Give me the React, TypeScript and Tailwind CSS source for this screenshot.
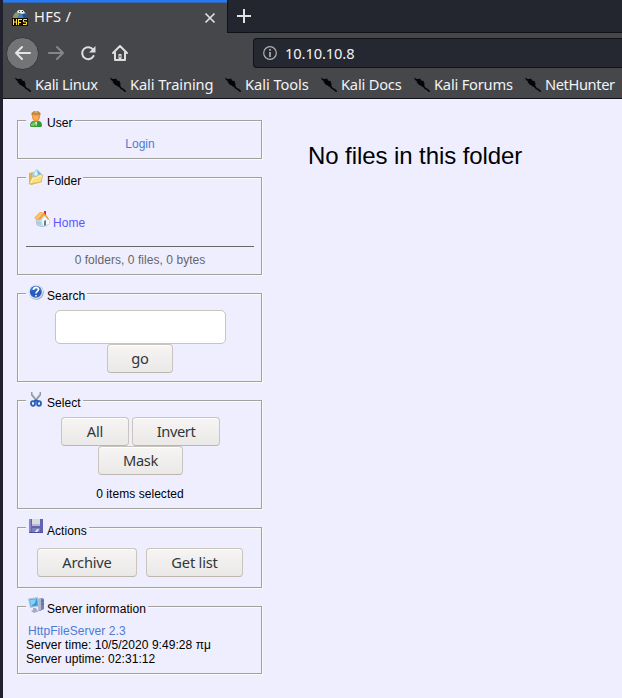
import type { ReactNode } from "react";

const BOOKMARKS = [
  { label: "Kali Linux", width: "w-[95px]", tracking: "tracking-[-0.33px]" },
  { label: "Kali Training", width: "w-[115px]", tracking: "tracking-[-0.1px]" },
  { label: "Kali Tools", width: "w-[96px]", tracking: "tracking-[-0.05px]" },
  { label: "Kali Docs", width: "w-[93px]", tracking: "tracking-[-0.2px]" },
  { label: "Kali Forums", width: "w-[111px]", tracking: "tracking-[-0.2px]" },
  { label: "NetHunter", width: "w-[98px]", tracking: "tracking-[-0.4px]" },
];

function KaliIcon() {
  return (
    <svg className="h-4 w-4 shrink-0" viewBox="0 0 16 16" fill="#050505">
      <path d="M0 .5l2.500 1.500L5 2l1-.7.800 1.700L8 4l1.500-.2.300 1.700.800 1L10.200 8.500l1.800 2.700 1.500.3L15 13l1 1v1l-2-.6-1.500-1.700-1.700-.4L9.500 10.500 7.500 9.300 6 8.300 4.500 7.500 3.500 6 2.500 5.300l.5-1L1 3z" />
    </svg>
  );
}

function Favicon() {
  return (
    <svg className="h-4 w-4" viewBox="0 0 16 16">
      <path d="M1 9V6l2-3 3-2 5-.5 3 3L15 9z" fill="#3f83bd" />
      <path d="M1 7l2-4 3-1 1 3-2 3-3 1z" fill="#8d9a65" />
      <path d="M5 1l2-1 4 0 2 3-3 1-2-1-2 0z" fill="#e9eeee" />
      <path d="M10 4l4 0 1 4-3 1z" fill="#205081" />
      <path d="M7 1h1v1H7zM10 1h1v1h-1z" fill="#222" />
      <rect y="8" width="16" height="8" fill="#160c05" />
      <path d="M1.500 9v6M4.500 9v6M1.500 12h3M6.500 15V9M6 9.500h4M6 12.500h3M15 9.500h-3.500v2.500h3v2.500H11" fill="none" stroke="#ffe832" />
    </svg>
  );
}

function UserIcon() {
  return (
    <svg className="h-4 w-4" viewBox="0 0 16 16">
      <path d="M2 15c0-4 2-5 4-5h4c3 0 4 2 4 5l-1 1H3z" fill="#349b36" />
      <path d="M3 13l3-2 2 2-2 2H3z" fill="#70cb5c" />
      <path d="M7 11h2l-.5 4H8z" fill="#eaf5dc" />
      <path d="M4 3l2-2h4l2 2v4l-2 3.500H6L4 7z" fill="#ee9744" />
      <path d="M5 5h5v3L8 9 6 8z" fill="#ffae55" />
      <path d="M3.500 4.500V2L6 0h4l2.500 2v2.500l-2-1H5z" fill="#b98445" />
      <path d="M5 1l3-1 2 1-1 1z" fill="#e2bb7c" />
    </svg>
  );
}

function FolderIcon() {
  return (
    <svg className="h-4 w-4" viewBox="0 0 16 16">
      <path d="M1 4l4-1 2 2 6-1 1 9-11 3-2-2z" fill="#dcb54a" />
      <path d="M4 5l5-5 5 5v4l-9 1z" fill="#9bd1ed" />
      <path d="M6 5l3-4 1 4-2 2z" fill="#e0f5ff" />
      <path d="M9 1l4 4-3 1z" fill="#6fb6df" />
      <path d="M1 15l3-7 4 0 2-2 5 0-2 7z" fill="#f8df83" stroke="#d6b34f" strokeWidth=".6" />
      <path d="M3 14l2-5 4 0 2-2 3 0" fill="none" stroke="#fff5bd" />
    </svg>
  );
}

function HomePageIcon() {
  return (
    <svg className="h-4 w-4" viewBox="0 0 16 16">
      <path d="M2 8l4 1 4-6 5 6v4l-6 3-6-2z" fill="#c5deef" stroke="#91adbd" strokeWidth=".6" />
      <path d="M8 9l3-4 4 4v4l-6 2z" fill="#f5fafb" />
      <path d="M0 7l6-6 5 1 4 6-1 1-4-5-4 5z" fill="#f5a13b" />
      <path d="M1 7l5-5 3 0-5 6z" fill="#ffc56b" />
      <path d="M10 0h2v4l-2-2z" fill="#cb3028" />
      <path d="M10 10l2-1v5l-2 1z" fill="#657b90" />
      <path d="M3 10l4 1v3l-4-1z" fill="#a8cde4" />
    </svg>
  );
}

function HelpIcon() {
  return (
    <svg className="h-4 w-4" viewBox="0 0 16 16">
      <circle cx="8.300" cy="8.300" r="7.500" fill="#9ba9bd" />
      <circle cx="7.700" cy="7.600" r="7.300" fill="#e3ebf4" />
      <circle cx="7.800" cy="7.800" r="6" fill="#285bc0" />
      <path d="M2.500 7a5.400 5.400 0 0110.500 0c-3-2-7-2-10.500 0z" fill="#4f84d7" />
      <path d="M5.500 6c0-3.500 5-3.400 5-.5 0 2-2.500 1.800-2.500 4M8 11v1.500" fill="none" stroke="#fff" strokeWidth="1.600" />
    </svg>
  );
}

function ScissorsIcon() {
  return (
    <svg className="h-4 w-4" viewBox="0 0 16 16" fill="none">
      <path d="M4 1v3l5 6M12 1v3L7 10" stroke="#9099a5" strokeWidth="2" />
      <path d="M4.500 1v2l4 5M11.500 1v2L8 7" stroke="#d4dce5" strokeWidth=".7" />
      <path d="M8 9L6 11M8 9l3 2" stroke="#2859a8" strokeWidth="2" />
      <ellipse cx="5" cy="12.500" rx="2" ry="2.300" stroke="#2462bd" strokeWidth="1.800" />
      <ellipse cx="11" cy="12.500" rx="2" ry="2.300" stroke="#2462bd" strokeWidth="1.800" />
    </svg>
  );
}

function DiskIcon() {
  return (
    <svg className="h-4 w-4" viewBox="0 0 16 16">
      <path d="M1 0h14v14H2l-1-1z" fill="#6262b3" />
      <path d="M1 0h2v13H1z" fill="#8686cd" />
      <path d="M4 0h8v7H4z" fill="#d9dbe0" />
      <path d="M4 5h8v2H4z" fill="#babdc9" />
      <path d="M4 9h8v5H4z" fill="#7c80bb" />
      <path d="M9 10h2l-2 4H6z" fill="#e1e5ef" />
      <path d="M1 13h14v1H1z" fill="#4d4d98" />
    </svg>
  );
}

function ServerIcon() {
  return (
    <svg className="h-4 w-4" viewBox="0 0 16 16">
      <path d="M10 2l4-1 2 1v10l-4 2-2-1z" fill="#7881a9" />
      <path d="M10 2l3-1v12l-3 0z" fill="#aeb8d1" />
      <path d="M13 4h3M13 7h3" stroke="#5c689a" />
      <path d="M0 1.500l10-1.500 1 9.500-9 1.500z" fill="#b4c3d6" />
      <path d="M1.500 2.500L9 1.500l.8 7L3 9.500z" fill="#319bdf" />
      <path d="M2 3l6-1-1 4-4 3z" fill="#82d4f5" />
      <path d="M5 11h3l1 2 2 1-5 2-3-2 2-1z" fill="#a6aac5" />
    </svg>
  );
}

function Panel({ icon, title, size, lowered = false, children }: { icon: ReactNode; title: string; size: string; lowered?: boolean; children: ReactNode }) {
  return (
    <fieldset className={`${size} w-[245px] border border-[#a3a19c] pr-[7px] pl-2 shadow-[1px_1px_0_#fafaf8,inset_1px_1px_0_#fafaf8]`}>
      <legend className={`${lowered ? "pt-px" : "pt-0"} flex h-[19px] items-start gap-[3px] bg-[#eeeeff] px-[2px]`}>
        {icon}
        <span className="mt-[5px] leading-[14px]">{title}</span>
      </legend>
      {children}
    </fieldset>
  );
}

function Button({ width, tracking = "tracking-[-0.2px]", children }: { width: string; tracking?: string; children: ReactNode }) {
  return (
    <button
      className={`${width} ${tracking} h-[29px] rounded-[4px] border border-[#c9c4bd] border-b-[#bcb6ae] bg-linear-to-b from-[#f6f5f4] to-[#eae9e7] text-center font-['Noto_Sans',sans-serif] text-[14.67px] leading-[27px] whitespace-nowrap text-[#30373a] shadow-[inset_0_1px_0_#fff]`}
    >
      {children}
    </button>
  );
}

export default function App() {
  return (
    <div className="flex h-[698px] w-[622px] overflow-hidden bg-[#1f222c]">
      <div className="ml-[3px] flex w-[619px] flex-col">
        <header className="h-[99px] border-b border-[#111217] bg-[#45474b] font-['Noto_Sans',sans-serif] text-[14.67px] text-[#f3f3f3]">
          <div className="flex h-[33px] bg-[#23262f]">
            <div className="flex w-[224px] items-center border-t-2 border-[#2878ee] bg-[#45474b] pl-[9px] shadow-[inset_0_1px_0_#3167b5]">
              <Favicon />
              <span className="-mt-[3px] ml-[6px] w-[168px] leading-5 tracking-[0.3px]">HFS /</span>
              <svg className="h-4 w-4" viewBox="0 0 16 16" fill="none" stroke="#dedede" strokeWidth="1.700">
                <path d="M3.500 3.500l9 9M12.500 3.500l-9 9" />
              </svg>
            </div>
            <div className="flex flex-1 items-center border-b border-l border-[#111217] pl-[8px]">
              <svg className="h-4 w-4" viewBox="0 0 16 16" fill="none" stroke="#e2e2e2" strokeWidth="2">
                <path d="M8 1v14M1 8h14" />
              </svg>
            </div>
          </div>
          <div className="flex h-10 items-center">
            <div className="ml-[3px] flex h-[33px] w-[33px] items-center justify-center rounded-full border border-[#35373b] bg-[#737476]">
              <svg className="h-4 w-4" viewBox="0 0 16 16" fill="none" stroke="#e4e4e4" strokeWidth="2" strokeLinecap="round" strokeLinejoin="round">
                <path d="M1 8h14M7 2L1 8l6 6" />
              </svg>
            </div>
            <svg className="ml-[9px] h-4 w-4" viewBox="0 0 16 16" fill="none" stroke="#858689" strokeWidth="2" strokeLinecap="round" strokeLinejoin="round">
              <path d="M1 8h14M9 2l6 6-6 6" />
            </svg>
            <svg className="ml-4 h-4 w-4" viewBox="0 0 16 16" fill="none" stroke="#dedede" strokeWidth="2">
              <path d="M13 4.500A6 6 0 1013.500 11" strokeLinecap="round" />
              <path d="M15.500 1v6.500H9z" fill="#dedede" stroke="none" />
            </svg>
            <svg className="ml-4 h-4 w-4" viewBox="0 0 16 16" fill="none" stroke="#dedede" strokeWidth="2" strokeLinejoin="round" strokeLinecap="round">
              <path d="M1 8l7-7 7 7M3 7.500V15h10V7.500" />
              <path d="M6.500 14V9h3v5z" fill="#dedede" stroke="none" />
              <path d="M8 11v1" stroke="#45474b" strokeWidth="1" />
            </svg>
            <div className="ml-[125px] flex h-[30px] flex-1 items-center rounded-l-[4px] border border-r-0 border-[#111217] bg-[#252731] pl-[9px]">
              <svg className="h-[14px] w-[14px]" viewBox="0 0 14 14" fill="none" stroke="#b0b1b4">
                <circle cx="7" cy="7" r="6.300" strokeWidth="1.200" />
                <path d="M7 6v5M7 3v1.700" strokeWidth="1.700" />
              </svg>
              <span className="ml-[8px] leading-5 tracking-[-0.1px]">10.10.10.8</span>
            </div>
          </div>
          <nav className="flex h-[25px] items-start overflow-hidden pt-px pl-3">
            {BOOKMARKS.map((bookmark) => (
              <div key={bookmark.label} className={`${bookmark.width} flex shrink-0 items-start gap-1 whitespace-nowrap`}>
                <span className="mt-[3px]">
                  <KaliIcon />
                </span>
                <span className={`${bookmark.tracking} leading-5`}>{bookmark.label}</span>
              </div>
            ))}
          </nav>
        </header>

        <main className="flex flex-1 bg-[#eeeeff] pl-[14px] font-['Liberation_Sans',Arial,sans-serif] text-[12px] leading-[14px] text-black">
          <aside className="flex w-[245px] flex-col gap-[9px] pt-3 tracking-[0.05px]">
            <Panel icon={<UserIcon />} title="User" size="h-[48px]">
              <div className="pt-[7px] text-center text-[#4a7cd5]">Login</div>
            </Panel>
            <Panel icon={<FolderIcon />} title="Folder" size="h-[107px]" lowered>
              <div className="flex h-[60px] items-start gap-[3px] border-b border-[#666] pt-[24px] pl-[8px] text-[#5c55ff]">
                <HomePageIcon />
                <span className="mt-[5px]">Home</span>
              </div>
              <div className="pt-[6px] text-center text-[#666]">0 folders, 0 files, 0 bytes</div>
            </Panel>
            <Panel icon={<HelpIcon />} title="Search" size="h-[98px]">
              <div className="flex flex-col items-center pt-[7px]">
                <input aria-label="Search" className="ml-px h-[34px] w-[171px] rounded-[5px] border border-[#c8c4be] bg-white px-2" />
                <Button width="w-[66px]">go</Button>
              </div>
            </Panel>
            <Panel icon={<ScissorsIcon />} title="Select" size="h-[118px]">
              <div className="flex flex-col items-center pt-[7px]">
                <div className="ml-px flex gap-[3px]">
                  <Button width="w-[68px]">All</Button>
                  <Button width="w-[88px]" tracking="tracking-[-0.4px]">Invert</Button>
                </div>
                <div className="ml-px flex">
                  <Button width="w-[85px]" tracking="tracking-[-0.4px]">Mask</Button>
                </div>
                <div className="mt-3">0 items selected</div>
              </div>
            </Panel>
            <Panel icon={<DiskIcon />} title="Actions" size="h-[70px]" lowered>
              <div className="flex justify-center gap-[9px] pt-[11px]">
                <Button width="w-[100px]">Archive</Button>
                <Button width="w-[97px]">Get list</Button>
              </div>
            </Panel>
            <Panel icon={<ServerIcon />} title="Server information" size="h-[77px]">
              <div className="pt-2">
                <div className="pl-[2px] text-[#4a7cd5]">HttpFileServer 2.3</div>
                <div>Server time: 10/5/2020 9:49:28 πμ</div>
                <div>Server uptime: 02:31:12</div>
              </div>
            </Panel>
          </aside>
          <section className="pt-[43px] pl-[46px] text-[24px] leading-[28px] tracking-[-0.08px]">No files in this folder</section>
        </main>
      </div>
    </div>
  );
}
